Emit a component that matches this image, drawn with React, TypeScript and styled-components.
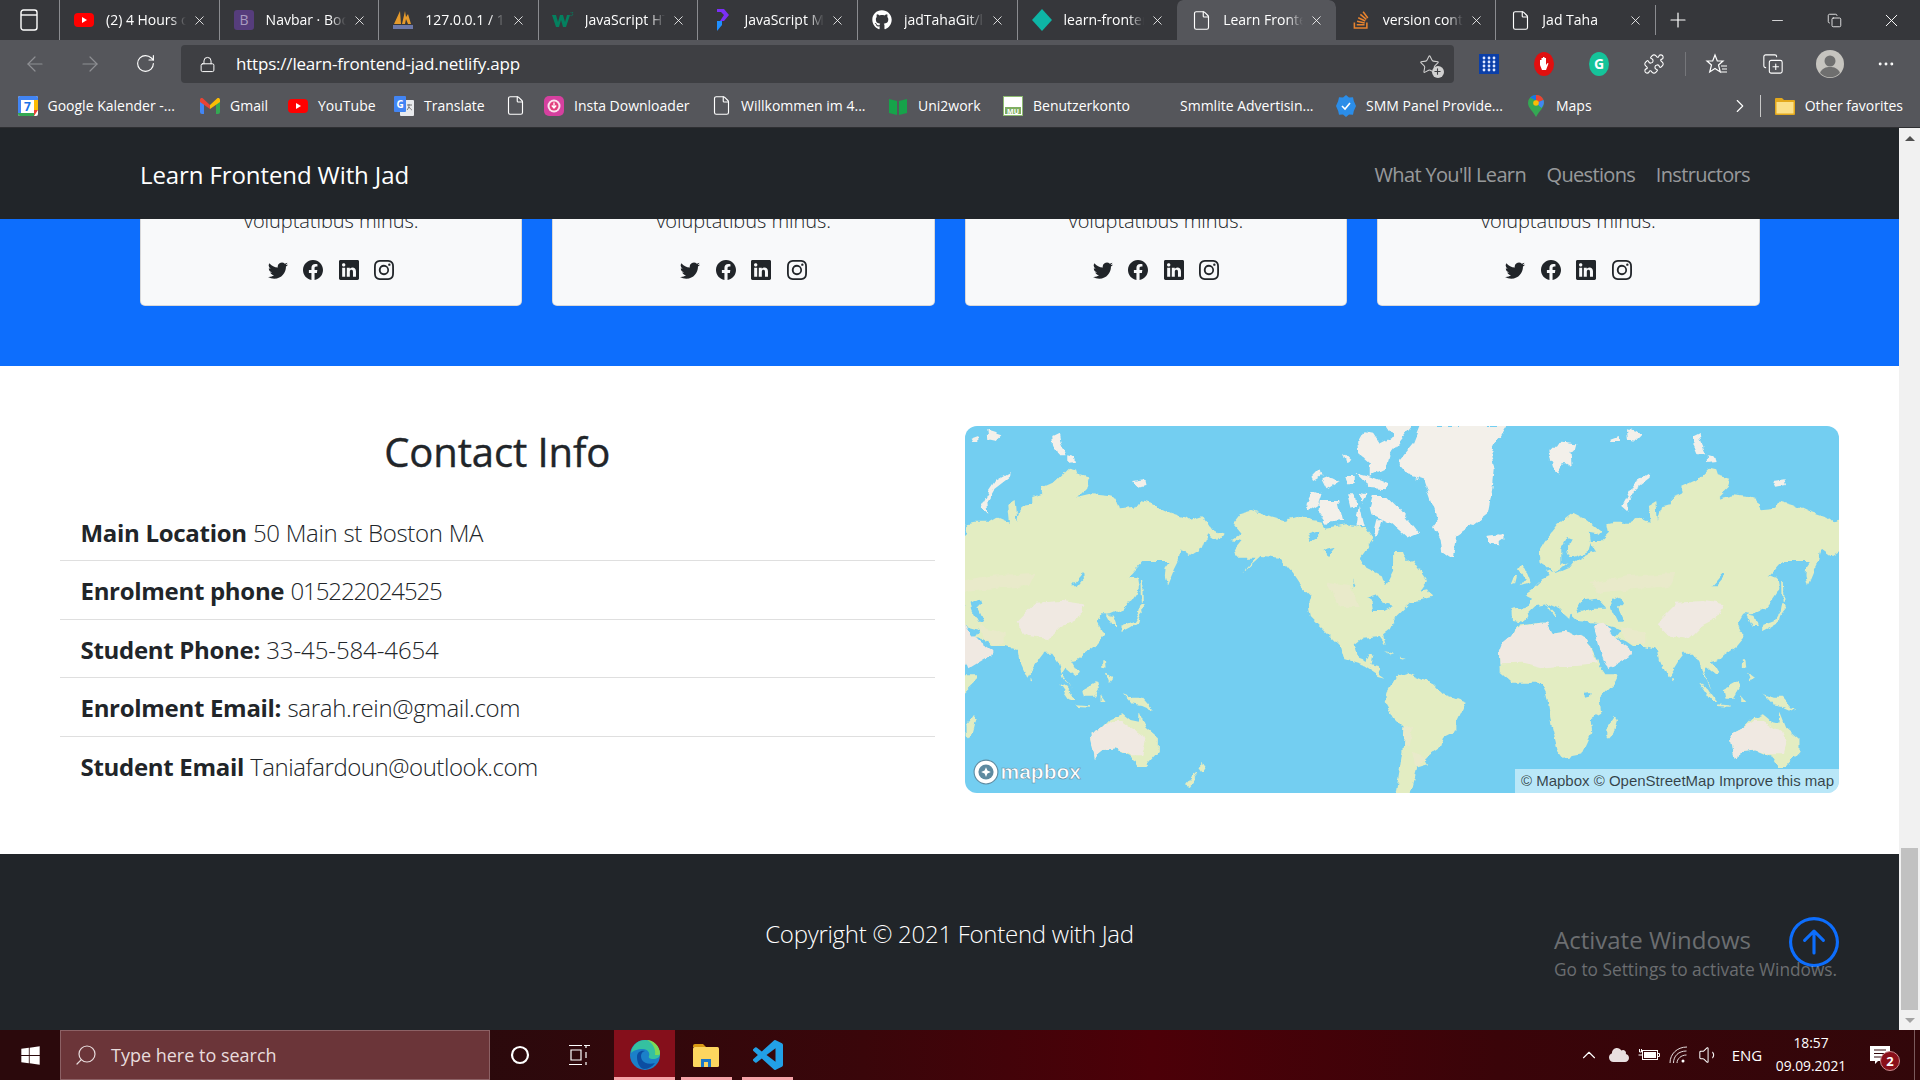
import React from "react";
import styled, { createGlobalStyle } from "styled-components";
import {
  ArrowLeft, ArrowRight, RotateCw, Lock, File, X, Plus, Minus, Copy, Puzzle, Star, CopyPlus,
  Ellipsis, ChevronRight, ChevronUp, Search, Volume1,
} from "lucide-react";
import { BsTwitter, BsFacebook, BsLinkedin, BsInstagram, BsArrowUpCircle } from "react-icons/bs";
import { FaGithub, FaStackOverflow, FaWindows, FaCloud } from "react-icons/fa";

const uiFont = `"Open Sans", "Noto Sans", sans-serif`;

const GlobalStyle = createGlobalStyle`
  html, body {
    margin: 0;
    height: 100%;
    overflow: hidden;
    font-family: ${uiFont};
  }
  * { box-sizing: border-box; }
`;

/* favicons */
const Favicon = ({ name }: { name: string }) => {
  switch (name) {
    case "youtube":
      return (
        <svg width="20" height="14" viewBox="0 0 20 14">
          <rect width="20" height="14" rx="4" fill="#f00" />
          <path d="M8 4l5 3-5 3z" fill="#fff" />
        </svg>
      );
    case "bootstrap":
      return (
        <svg width="20" height="20" viewBox="0 0 20 20">
          <rect width="20" height="20" rx="3" fill="#563d7c" />
          <text x="10" y="15" textAnchor="middle" fontSize="14" fill="#a99bc0" fontFamily="Open Sans">B</text>
        </svg>
      );
    case "pma":
      return (
        <svg width="22" height="20" viewBox="0 0 22 20">
          <path d="M2 14 8 1l1 13zM10 14l3-13 1 6 2-3 3 10h-3l-2-5-1 5z" fill="#e59a2c" />
          <rect x="1" y="15" width="20" height="4" fill="#6c78a8" />
        </svg>
      );
    case "w3":
      return (
        <svg width="22" height="16" viewBox="0 0 22 16">
          <path d="M0 3h4l2 7 2-7h3l2 7 2-7h3l-4 12h-3L9 8l-2 7H4z" fill="#04805f" />
          <path d="M18 0h3l-1 1.500c1 .4 1 2-.5 2.200-.5 0-1-.2-1.300-.6" fill="none" stroke="#04805f" strokeWidth=".7" />
        </svg>
      );
    case "jsinfo":
      return (
        <svg width="16" height="22" viewBox="0 0 16 22">
          <path d="M3 0h7l5 6-5 6H6l4-6-3-3H3z" fill="#7b2ff7" />
          <path d="M3 12h5v4l-5 6z" fill="#1f8fff" />
        </svg>
      );
    case "github":
      return <FaGithub size={20} color="#fff" />;
    case "netlify":
      return (
        <svg width="20" height="22" viewBox="0 0 20 22">
          <path d="M10 0 20 11 10 22 0 11z" fill="#0eb5a5" />
        </svg>
      );
    case "doc":
      return <File size={21} color="#fff" strokeWidth={1.3} />;
    case "so":
      return <FaStackOverflow size={20} color="#e8832e" />;
    case "calendar":
      return (
        <svg width="20" height="20" viewBox="0 0 20 20">
          <rect width="20" height="20" rx="2" fill="#fff" />
          <path d="M0 2a2 2 0 0 1 2-2h16a2 2 0 0 1 2 2v2H0z" fill="#4285f4" />
          <path d="M0 4h3v13H0z" fill="#4285f4" />
          <path d="M0 17h16v3H2a2 2 0 0 1-2-2z" fill="#34a853" />
          <path d="M16 14h4l-4 6z" fill="#ea4335" />
          <path d="M16 4h4v10h-4z" fill="#fbbc04" />
          <text x="9.500" y="15" textAnchor="middle" fontSize="12" fontWeight="700" fill="#1a73e8" fontFamily="Open Sans">7</text>
        </svg>
      );
    case "gmail":
      return (
        <svg width="20" height="16" viewBox="0 0 20 16">
          <path d="M0 2v12a2 2 0 0 0 2 2h2V6z" fill="#4285f4" />
          <path d="M20 2v12a2 2 0 0 1-2 2h-2V6z" fill="#34a853" />
          <path d="M0 2c0-2 2-2.500 3-1.500L10 7v4L0 4z" fill="#ea4335" />
          <path d="M20 2c0-2-2-2.500-3-1.500L10 7v4l10-7z" fill="#fbbc04" />
        </svg>
      );
    case "translate":
      return (
        <svg width="20" height="20" viewBox="0 0 20 20">
          <rect x="6" y="4" width="14" height="16" rx="1" fill="#e8eaed" />
          <rect width="12" height="16" rx="1" fill="#4285f4" />
          <text x="6" y="12" textAnchor="middle" fontSize="10" fontWeight="700" fill="#fff" fontFamily="Open Sans">G</text>
          <path d="M13 9h5M15 8v1c0 2-1 4-2 5M15 11c1 1.500 2 2.500 3 3" stroke="#777" fill="none" />
        </svg>
      );
    case "insta":
      return (
        <svg width="20" height="20" viewBox="0 0 20 20">
          <rect width="20" height="20" rx="5" fill="#d6409f" />
          <circle cx="10" cy="10" r="6.500" fill="#fbe3ee" />
          <circle cx="10" cy="10" r="4.500" fill="#e2407e" />
          <path d="M10 6.500v5M7.800 9.500 10 12l2.200-2.500" stroke="#fff" fill="none" strokeWidth="1.300" />
        </svg>
      );
    case "uni":
      return (
        <svg width="20" height="18" viewBox="0 0 20 18">
          <path d="M1 2l8 2v14l-8-2zM19 2l-8 2v14l8-2z" fill="#16a34a" />
        </svg>
      );
    case "mu":
      return (
        <svg width="20" height="20" viewBox="0 0 20 20">
          <rect x=".5" y=".5" width="19" height="19" fill="#fff" stroke="#8dbb70" />
          <rect x="2" y="11" width="16" height="7" fill="#7fae62" />
          <text x="10" y="17.500" textAnchor="middle" fontSize="7" fontWeight="700" fill="#fff" fontFamily="Open Sans">MU</text>
        </svg>
      );
    case "smm":
      return (
        <svg width="20" height="22" viewBox="0 0 20 22">
          <path d="M10 0l3 2.500 4-.3.8 3.800L20 11l-2.200 5-.8 3.800-4-.3L10 22l-3-2.500-4 .3-.8-3.800L0 11l2.200-5L3 2.200l4 .3z" fill="#2b8de8" />
          <path d="M6 11l3 3 5-6" stroke="#fff" strokeWidth="1.600" fill="none" />
        </svg>
      );
    case "maps":
      return (
        <svg width="16" height="22" viewBox="0 0 16 22">
          <path d="M8 0a8 8 0 0 1 8 8c0 5-5 8-8 14-3-6-8-9-8-14a8 8 0 0 1 8-8z" fill="#34a853" />
          <path d="M2 2.500A8 8 0 0 1 8 0v5.500z" fill="#1a73e8" />
          <path d="M8 0a8 8 0 0 1 7.500 5L8 8z" fill="#ea4335" />
          <path d="M15.500 5c1 3 0 5-2 8L8 8z" fill="#4285f4" />
          <circle cx="8" cy="8" r="2.800" fill="#fbbc04" />
        </svg>
      );
    case "folder":
      return (
        <svg width="20" height="18" viewBox="0 0 20 18">
          <path d="M0 2a1 1 0 0 1 1-1h6l2 2h10a1 1 0 0 1 1 1v13a1 1 0 0 1-1 1H1a1 1 0 0 1-1-1z" fill="#e3a81c" />
          <rect x="1.500" y="5" width="17" height="11.500" fill="#fbe08a" />
        </svg>
      );
    default:
      return null;
  }
};

const tabs = [
  { icon: "youtube", title: "(2) 4 Hours of Study", divider: true },
  { icon: "bootstrap", title: "Navbar · Bootstrap", divider: true },
  { icon: "pma", title: "127.0.0.1 / 127.0.0.1", divider: true },
  { icon: "w3", title: "JavaScript HTML DOM", divider: true },
  { icon: "jsinfo", title: "JavaScript Modules", divider: true },
  { icon: "github", title: "jadTahaGit/learn", divider: true },
  { icon: "netlify", title: "learn-frontend-jad", divider: true },
  { icon: "doc", title: "Learn Frontend With", active: true },
  { icon: "so", title: "version control" },
  { icon: "doc", title: "Jad Taha", divider: true },
];

const bookmarks = [
  { icon: "calendar", text: "Google Kalender -...", width: 182.5 },
  { icon: "gmail", text: "Gmail", width: 88 },
  { icon: "youtube", text: "YouTube", width: 106 },
  { icon: "translate", text: "Translate", width: 111 },
  { icon: "doc", text: "", width: 39 },
  { icon: "insta", text: "Insta Downloader", width: 167 },
  { icon: "doc", text: "Willkommen im 4...", width: 177 },
  { icon: "uni", text: "Uni2work", width: 115 },
  { icon: "mu", text: "Benutzerkonto", width: 147 },
  { icon: "", text: "Smmlite Advertisin...", width: 186 },
  { icon: "smm", text: "SMM Panel Provide...", width: 190 },
  { icon: "maps", text: "Maps", width: 120 },
];

const contacts = [
  { label: "Main Location", value: "50 Main st Boston MA", spacing: -0.3 },
  { label: "Enrolment phone", value: "015222024525", spacing: -1.1 },
  { label: "Student Phone:", value: "33-45-584-4654", spacing: -0.1 },
  { label: "Enrolment Email:", value: "sarah.rein@gmail.com", spacing: -0.3 },
  { label: "Student Email", value: "Taniafardoun@outlook.com", spacing: -0.46 },
];

/* map shapes, traced from the tiles at 3x */
const oldWorld = {
  land: [
    "68,548 110,542 130,515 108,505 130,490 160,460 180,450 165,430 185,440 205,440 240,425 260,400 290,385 320,375 300,345 330,345 355,320 350,295 370,290 420,290 445,275 480,290 475,240 500,225 505,285 515,240 550,235 550,210 580,200 575,185 620,165 660,125 680,130 685,145 722,155 715,185 685,215 730,205 780,210 800,215 810,250 860,245 875,225 910,235 965,260 1010,275 1023,285 1063,273 1088,310 1128,320 1108,345 1078,325 1063,365 1023,390 995,370 985,405 945,405 880,405 840,450 865,460 870,490 850,520 830,545 785,565 760,565 745,590 765,630 740,660 700,690 690,700 670,705 690,740 680,750 650,725 640,740 665,790 640,750 630,710 610,680 585,680 570,700 535,755 510,700 505,670 470,660 430,660 400,640 375,635 395,610 320,590 262,585 240,565 235,585 215,550 170,530 205,570 195,570 170,535 140,540 115,565 100,590 70,585",
    "145,378 165,345 205,295 250,260 290,280 335,315 325,325 300,320 305,355 300,372 250,400 215,430 190,440 165,415 150,405",
    "85,430 95,415 105,425 123,470 90,480 105,460",
    "65,475 75,450 85,450 80,470",
    "950,425 985,375 995,370 990,400 975,430 955,478 948,450",
    "875,535 885,535 890,545 870,570 865,590 840,605 815,618 815,600 855,585 870,560",
    "875,462 880,462 882,530 876,530",
    "770,565 795,570 805,600 790,600",
    "760,700 768,700 770,725 760,722",
    "770,740 790,755 780,768",
    "628,772 650,785 680,825 665,825",
    "680,835 720,838 720,842 682,840",
    "700,790 745,765 750,790 735,815 705,815",
    "755,805 770,825 755,825",
    "822,805 850,815 880,815 915,855 880,840 850,835",
    "545,755 551,758 551,766 545,765",
    "65,630 80,600 150,590 170,590 185,620 230,615 295,640 330,715 350,745 385,745 370,775 330,815 335,860 300,880 305,920 275,985 220,995 205,975 185,895 170,800 155,770 70,770 30,735 28,680",
    "350,905 375,870 382,880 370,925 358,938 350,930",
    "722,925 760,905 785,880 820,865 845,885 870,890 872,860 890,905 930,940 930,975 890,1020 865,1020 845,990 800,970 760,975 735,995",
  ],
  pale: [
    "300,470 420,450 560,440 540,480 430,490 320,500",
    "395,600 470,620 470,655 430,655 400,635",
  ],
  sand: [
    "28,680 40,650 65,630 80,605 150,590 170,590 185,620 230,615 295,640 325,715 260,720 210,720 160,725 100,710 30,712",
    "310,595 345,590 370,625 395,650 430,675 430,685 355,730 335,680",
    "722,925 760,905 790,885 820,885 880,925 890,950 880,985 845,985 800,970 760,975 735,995",
    "520,570 560,530 640,525 705,535 680,580 640,600 600,640 540,630 500,590",
  ],
  ice: [
    "0,332 38,325 42,340 20,355 0,352",
    "395,240 420,195 440,165 482,140 480,155 435,190 415,225 418,260",
    "175,65 205,65 215,50 260,55 255,75 240,80 243,122 225,110 205,140 190,120",
    "610,30 630,20 635,50 650,85 625,85 612,55",
    "655,85 675,90 678,105 655,108",
    "850,165 885,160 890,180 860,185",
    "365,38 388,30 388,48 370,48",
    "412,10 460,25 440,45 415,40",
  ],
  water: [
    "265,550 285,520 320,515 350,545 310,545 262,562",
    "365,530 395,515 400,530 385,545 405,590 385,590 370,560",
    "672,478 700,445 705,450 682,478",
    "285,800 300,798 298,812 285,815",
    "235,330 250,335 230,375 240,395 275,385 285,390 250,410 215,420 215,365",
  ],
};

const newWorld = {
  land: [
    "160,290 180,265 215,255 260,270 315,285 365,270 395,285 430,290 440,305 500,295 555,305 580,340 540,395 560,425 610,450 620,480 640,440 640,375 670,375 680,405 700,400 745,465 720,495 745,490 760,515 725,525 690,530 650,570 630,610 610,625 618,655 600,630 550,635 525,655 535,695 560,705 570,685 580,690 575,715 600,720 605,745 620,755 600,750 540,710 490,695 480,660 430,610 390,570 385,545 395,510 370,485 340,440 300,395 245,390 190,440 230,395 170,395 165,370 185,345 155,340 185,320",
    "610,675 640,685 630,688",
    "660,692 678,695 664,698",
    "620,800 650,750 680,740 760,775 790,805 858,830 830,890 830,915 790,935 780,965 735,995 745,1015 710,1025 690,1101 648,1101 660,1030 670,960 675,905 640,870 615,825",
    "55,1005 78,1020 65,1040 55,1025",
    "18,1075 45,1040 55,1045 30,1080",
  ],
  pale: ["675,905 700,900 690,960 670,960", "700,975 740,1000 710,1025", "440,470 510,480 540,540 480,540"],
  sand: [] as string[],
  ice: [
    "660,100 700,50 720,0 980,0 950,50 935,80 945,130 940,180 925,260 880,295 830,330 820,390 810,398 785,380 780,340 760,300 775,280 760,240 735,165 690,150 660,115",
    "380,235 400,195 425,205 415,235 390,250",
    "420,225 475,225 490,285 440,290 415,255",
    "505,205 525,205 530,240 515,245",
    "540,200 560,205 545,230",
    "570,245 580,210 620,210 660,250 715,320 680,335 630,290 600,275 575,265",
    "395,155 420,130 425,150 400,165",
    "425,160 450,150 480,165 440,190",
    "500,150 525,150 525,175 505,175",
    "530,140 570,150 620,170 615,190 560,185 555,165",
    "535,50 555,15 580,20 600,50 640,30 620,0 700,0 660,50 630,90 620,125 570,150 570,110 540,85",
    "490,80 515,105 500,115",
    "590,280 610,280 590,335 580,320",
    "540,240 555,300 530,300",
    "920,330 960,325 960,355 930,352",
  ],
  water: [
    "560,515 590,505 605,525 640,540 610,555 580,555 575,525",
    "385,325 415,315 415,335 395,345",
    "520,460 530,480 525,485",
    "425,375 465,365 445,390",
  ],
};

const Continents = ({ shapes, x }: { shapes: typeof oldWorld; x: number }) => (
  <g transform={`translate(${x} 0) scale(0.3333)`}>
    {shapes.land.map((p) => <polygon key={p} points={p} fill="#e3edc2" />)}
    {shapes.pale.map((p) => <polygon key={p} points={p} fill="#e9eaca" />)}
    {shapes.sand.map((p) => <polygon key={p} points={p} fill="#f0e9e2" />)}
    {shapes.ice.map((p) => <polygon key={p} points={p} fill="#f3f0ea" />)}
    {shapes.water.map((p) => <polygon key={p} points={p} fill="#73cef1" />)}
  </g>
);

export default function App() {
  return (
    <>
      <GlobalStyle />
      <Screen>
        <TabStrip>
          <WindowButton>
            <svg width="18" height="22" viewBox="0 0 18 22" fill="none" stroke="#fff" strokeWidth="1.400">
              <rect x="1" y="1" width="16" height="20" rx="2.500" />
              <path d="M1 6h16" />
            </svg>
          </WindowButton>
          {tabs.map((t) => (
            <Tab key={t.title} $active={t.active} $divider={t.divider}>
              <TabIcon><Favicon name={t.icon} /></TabIcon>
              <TabTitle>{t.title}</TabTitle>
              <TabClose><X size={15} strokeWidth={1.3} /></TabClose>
            </Tab>
          ))}
          <NewTab><Plus size={24} strokeWidth={1.2} /></NewTab>
          <WindowControls>
            <WindowControl><Minus size={17} strokeWidth={1.1} /></WindowControl>
            <WindowControl><Copy size={15} strokeWidth={1.3} /></WindowControl>
            <WindowControl><X size={21} strokeWidth={1.1} /></WindowControl>
          </WindowControls>
        </TabStrip>

        <Toolbar>
          <NavButton $dim><ArrowLeft size={24} strokeWidth={1.2} /></NavButton>
          <NavButton $dim><ArrowRight size={24} strokeWidth={1.2} /></NavButton>
          <NavButton><RotateCw size={21} strokeWidth={1.3} /></NavButton>
          <Omnibox>
            <Lock size={17} strokeWidth={1.4} />
            <Url>https://learn-frontend-jad.netlify.app</Url>
            <FavStar>
              <Star size={21} strokeWidth={1.2} />
              <FavPlus><Plus size={9} strokeWidth={3} /></FavPlus>
            </FavStar>
          </Omnibox>
          <ToolButton>
            <svg width="20" height="20" viewBox="0 0 20 20">
              <rect width="20" height="20" fill="#0b3fa8" />
              {[5, 10, 15].map((cx) => [4, 8, 12, 16].map((cy) => (
                <circle key={`${cx}-${cy}`} cx={cx} cy={cy} r="1.400" fill="#dfe8ff" />
              )))}
            </svg>
          </ToolButton>
          <ToolButton>
            <svg width="20" height="24" viewBox="0 0 20 24">
              <ellipse cx="10" cy="12" rx="10" ry="12" fill="#e00f0f" />
              <path d="M6 13V8h1.500v3V6h1.500v5-6h1.500v6-5H12v7l1.500-2 1 .6-2.500 6.400H8z" fill="#fff" />
            </svg>
          </ToolButton>
          <ToolButton>
            <svg width="20" height="24" viewBox="0 0 20 24">
              <ellipse cx="10" cy="12" rx="10" ry="12" fill="#15c39a" />
              <text x="10" y="17" textAnchor="middle" fontSize="14" fontWeight="700" fill="#fff" fontFamily="Open Sans">G</text>
            </svg>
          </ToolButton>
          <ToolButton><Puzzle size={22} strokeWidth={1.2} /></ToolButton>
          <ToolDivider />
          <ToolButton $wide>
            <svg width="24" height="24" viewBox="0 0 24 24" fill="none" stroke="#fff" strokeWidth="1.200">
              <path d="M10 3l2.300 6H18l-4.500 4 1.800 7L10 16.500 4.700 20l1.800-7L2 9h5.700z" />
              <path d="M16 14h6M17 17h5M16 20h6" />
            </svg>
          </ToolButton>
          <ToolButton $wide><CopyPlus size={22} strokeWidth={1.2} /></ToolButton>
          <ToolButton $wide>
            <svg width="28" height="28" viewBox="0 0 28 28">
              <circle cx="14" cy="14" r="14" fill="#c6c4bf" />
              <circle cx="14" cy="11" r="5.500" fill="#6f6f6f" />
              <path d="M4 23c2-5 6-6 10-6s8 1 10 6a14 14 0 0 1-20 0z" fill="#6f6f6f" />
            </svg>
          </ToolButton>
          <ToolButton $wide><Ellipsis size={20} strokeWidth={1.5} /></ToolButton>
        </Toolbar>

        <BookmarkBar>
          {bookmarks.map((b) => (
            <Bookmark key={b.text + b.width} $width={b.width}>
              <BookmarkIcon><Favicon name={b.icon} /></BookmarkIcon>
              {b.text}
            </Bookmark>
          ))}
          <BookmarkEnd>
            <ChevronRight size={22} strokeWidth={1.2} />
            <EndDivider />
            <BookmarkIcon><Favicon name="folder" /></BookmarkIcon>
            Other favorites
          </BookmarkEnd>
        </BookmarkBar>

        <Viewport>
          <Page>
            <Navbar>
              <Brand>Learn Frontend With Jad</Brand>
              <NavLinks>
                <NavLink>What You'll Learn</NavLink>
                <NavLink>Questions</NavLink>
                <NavLink>Instructors</NavLink>
              </NavLinks>
            </Navbar>

            <Instructors>
              {[0, 1, 2, 3].map((i) => (
                <Card key={i}>
                  <CardText>voluptatibus minus.</CardText>
                  <Socials>
                    <BsTwitter size={20} />
                    <BsFacebook size={20} />
                    <BsLinkedin size={20} />
                    <BsInstagram size={20} />
                  </Socials>
                </Card>
              ))}
            </Instructors>

            <Contact>
              <div>
                <Heading>Contact Info</Heading>
                <ContactList>
                  {contacts.map((c) => (
                    <ContactRow key={c.label}>
                      <strong>{c.label}</strong> <ContactValue $spacing={c.spacing}>{c.value}</ContactValue>
                    </ContactRow>
                  ))}
                </ContactList>
              </div>
              <MapPanel>
                <MapSvg viewBox="0 0 875 367" preserveAspectRatio="none">
                  <defs>
                    <filter id="coast" filterUnits="userSpaceOnUse" x="-40" y="-40" width="960" height="450">
                      <feTurbulence type="fractalNoise" baseFrequency="0.09" numOctaves="3" seed="4" />
                      <feDisplacementMap in="SourceGraphic" scale="7" xChannelSelector="R" yChannelSelector="G" />
                    </filter>
                  </defs>
                  <g filter="url(#coast)">
                    <Continents shapes={oldWorld} x={-116} />
                    <Continents shapes={newWorld} x={215} />
                    <Continents shapes={oldWorld} x={525} />
                  </g>
                </MapSvg>
                <MapLogo>
                  <svg width="26" height="26" viewBox="0 0 24 24">
                    <circle cx="12" cy="12" r="11" fill="#fff" stroke="#5d8aa0" strokeWidth="1" />
                    <circle cx="12" cy="12" r="7" fill="#5d8aa0" />
                    <path d="M12 7.500l1.300 3.200 3.200 1.300-3.200 1.300-1.300 3.200-1.300-3.200L7.500 12l3.200-1.300z" fill="#fff" />
                  </svg>
                  mapbox
                </MapLogo>
                <Attribution>© Mapbox © OpenStreetMap Improve this map</Attribution>
              </MapPanel>
            </Contact>

            <Footer>Copyright © 2021 Fontend with Jad</Footer>

            <ToTop><BsArrowUpCircle size={50} /></ToTop>
            <Watermark>
              <WatermarkTitle>Activate Windows</WatermarkTitle>
              <WatermarkText>Go to Settings to activate Windows.</WatermarkText>
            </Watermark>
          </Page>
          <Scrollbar>
            <ScrollArrow $up />
            <ScrollTrack><ScrollThumb /></ScrollTrack>
            <ScrollArrow />
          </Scrollbar>
        </Viewport>

        <Taskbar>
          <StartButton><FaWindows size={21} /></StartButton>
          <SearchBox>
            <SearchGlass><Search size={24} strokeWidth={1.2} /></SearchGlass>
            Type here to search
          </SearchBox>
          <TaskButton>
            <svg width="20" height="20" viewBox="0 0 20 20" fill="none" stroke="#fff" strokeWidth="2.200">
              <circle cx="10" cy="10" r="8" />
            </svg>
          </TaskButton>
          <TaskButton>
            <svg width="22" height="22" viewBox="0 0 22 22" fill="none" stroke="#fff" strokeWidth="1.200">
              <path d="M0 1.500h13M0 20.500h13M2 6h10v10H2zM17 1v3M17 8v6M17 18v3M15 1.500h6" />
            </svg>
          </TaskButton>
          <AppButton $active>
            <svg width="32" height="32" viewBox="0 0 32 32">
              <circle cx="16" cy="16" r="15" fill="#1b80c9" />
              <path d="M2 14C3 5 10 1 16 1c8 0 15 6 15 14 0 3-3 5-7 5-3 0-5-1-4-3 1-3-1-7-6-7-6 0-10 2-12 4z" fill="#35c1a0" />
              <path d="M31 15c0-8-7-14-13-14 6 3 9 9 8 15 2 0 5-0 5-1z" fill="#7ed957" />
              <path d="M8 18c0-5 4-7 8-6-4 1-5 5-3 9 2 3 7 5 13 3-3 4-7 6-11 6-5-1-7-7-7-12z" fill="#0c4da2" />
            </svg>
          </AppButton>
          <AppButton $open>
            <svg width="28" height="28" viewBox="0 0 28 28">
              <path d="M1 5a2 2 0 0 1 2-2h8l3 3H1z" fill="#d99a14" />
              <rect x="1" y="6" width="26" height="20" rx="1.500" fill="#fdd65f" />
              <path d="M9 26v-8h10v8h-3v-5h-4v5z" fill="#1c78c8" />
            </svg>
          </AppButton>
          <AppButton $open>
            <svg width="30" height="30" viewBox="0 0 24 24">
              <path
                fill="#22a0e6"
                d="M23.15 2.587L18.21.21a1.494 1.494 0 0 0-1.705.29l-9.46 8.63-4.12-3.128a.999.999 0 0 0-1.276.057L.327 7.261A1 1 0 0 0 .326 8.74L3.899 12 .326 15.26a1 1 0 0 0 .001 1.479L1.65 17.94a.999.999 0 0 0 1.276.057l4.12-3.128 9.46 8.63a1.492 1.492 0 0 0 1.704.29l4.942-2.377A1.5 1.5 0 0 0 24 20.06V3.939a1.5 1.5 0 0 0-.85-1.352zm-5.146 14.861L10.826 12l7.178-5.448v10.896z"
              />
            </svg>
          </AppButton>
          <Tray>
            <TrayIcon><ChevronUp size={22} strokeWidth={1.2} /></TrayIcon>
            <TrayIcon><FaCloud size={20} color="#e8dfe0" /></TrayIcon>
            <TrayIcon>
              <svg width="22" height="14" viewBox="0 0 22 14" fill="none" stroke="#fff">
                <rect x="4.500" y="2.500" width="15" height="9" />
                <rect x="6" y="4" width="12" height="6" fill="#fff" stroke="none" />
                <path d="M20 5.500h1.500v3H20M.5 7H4M1.500 1v3h2V1" />
              </svg>
            </TrayIcon>
            <TrayIcon>
              <svg width="20" height="20" viewBox="0 0 20 20" fill="none" stroke="#e8dfe0" strokeWidth="1">
                <path d="M1 18C1 9 8 2 18 2M4.500 18c0-7 5-12 13-12M8 18c0-4 4-8 9.500-8" />
                <circle cx="14" cy="16" r="1.500" fill="#fff" stroke="none" />
              </svg>
            </TrayIcon>
            <TrayIcon><Volume1 size={22} strokeWidth={1.1} /></TrayIcon>
            <TrayLang>ENG</TrayLang>
            <Clock>
              <span>18:57</span>
              <span>09.09.2021</span>
            </Clock>
            <ActionCenter>
              <svg width="20" height="18" viewBox="0 0 20 18">
                <path d="M0 0h20v15H8l-3 3v-3H0z" fill="#fff" />
                <path d="M4 4h12M4 7.500h12M4 11h8" stroke="#32070a" />
              </svg>
              <ActionBadge>2</ActionBadge>
            </ActionCenter>
            <ShowDesktop />
          </Tray>
        </Taskbar>
      </Screen>
    </>
  );
}

const Screen = styled.div`
  width: 1920px;
  height: 1080px;
  display: flex;
  flex-direction: column;
  overflow: hidden;
  background: #fff;
`;

const TabStrip = styled.div`
  height: 40px;
  display: flex;
  flex-shrink: 0;
  background: #36373b;
  color: #fff;
`;

const WindowButton = styled.div`
  width: 59px;
  display: flex;
  align-items: center;
  justify-content: center;
  padding-right: 1px;
`;

const Tab = styled.div<{ $active?: boolean; $divider?: boolean }>`
  width: 159.6px;
  display: flex;
  align-items: center;
  position: relative;
  font-size: 14px;
  background: ${(p) => (p.$active ? "#55565b" : "transparent")};
  border-radius: ${(p) => (p.$active ? "7px 7px 0 0" : "0")};
  border-left: 1px solid ${(p) => (p.$divider ? "#8b8c90" : "transparent")};
  background-clip: padding-box;
`;

const TabIcon = styled.span`
  width: 46px;
  flex-shrink: 0;
  display: flex;
  justify-content: center;
  padding-left: 2px;
`;

const TabTitle = styled.span`
  width: 80px;
  padding-bottom: 1px;
  overflow: hidden;
  white-space: nowrap;
  mask-image: linear-gradient(to right, #000 80%, transparent 100%);
`;

const TabClose = styled.span`
  margin-left: 6px;
  display: flex;
`;

const NewTab = styled.div`
  width: 46px;
  display: flex;
  align-items: center;
  justify-content: center;
  border-left: 1px solid #8b8c90;
  margin: 5px 0;
`;

const WindowControls = styled.div`
  margin-left: auto;
  display: flex;
`;

const WindowControl = styled.div`
  width: 57px;
  display: flex;
  align-items: center;
  justify-content: center;
`;

const Toolbar = styled.div`
  height: 48px;
  flex-shrink: 0;
  display: flex;
  align-items: center;
  padding-left: 8px;
  background: #55565b;
  color: #fff;
`;

const NavButton = styled.div<{ $dim?: boolean }>`
  width: 55px;
  display: flex;
  justify-content: center;
  padding: 0 1px 1px 0;
  color: ${(p) => (p.$dim ? "#8e8f93" : "#fff")};
`;

const Omnibox = styled.div`
  width: 1272.6px;
  height: 38px;
  margin: 0 8px;
  padding: 0 0 0 18px;
  display: flex;
  align-items: center;
  border-radius: 4px;
  background: #3e3f43;
`;

const Url = styled.span`
  margin: 0 0 2px 20px;
  font-size: 17px;
  letter-spacing: -0.2px;
  color: #fff;
`;

const FavStar = styled.span`
  margin-left: auto;
  margin-right: 14px;
  display: flex;
  position: relative;
  color: #d0d0d0;
`;

const FavPlus = styled.span`
  position: absolute;
  right: -4px;
  bottom: -3px;
  width: 12px;
  height: 12px;
  border-radius: 50%;
  background: #d0d0d0;
  color: #3e3f43;
  display: flex;
  align-items: center;
  justify-content: center;
`;

const ToolButton = styled.div<{ $wide?: boolean }>`
  width: ${(p) => (p.$wide ? "56.5px" : "55px")};
  display: flex;
  justify-content: center;
`;

const ToolDivider = styled.div`
  width: 1px;
  height: 24px;
  margin: 0 3px;
  background: #75767a;
`;

const BookmarkBar = styled.div`
  height: 40px;
  flex-shrink: 0;
  display: flex;
  align-items: center;
  padding: 0 0 4px 19.5px;
  background: #55565b;
  border-bottom: 1px solid #2e2f32;
  color: #fff;
  font-size: 14px;
`;

const Bookmark = styled.div<{ $width: number }>`
  width: ${(p) => p.$width}px;
  display: flex;
  align-items: center;
  gap: 12px;
  white-space: nowrap;
`;

const BookmarkIcon = styled.span`
  width: 16px;
  flex-shrink: 0;
  display: flex;
  justify-content: center;
  svg {
    flex-shrink: 0;
  }
`;

const BookmarkEnd = styled.div`
  margin-left: auto;
  padding-right: 17px;
  display: flex;
  align-items: center;
  gap: 12px;
  white-space: nowrap;
`;

const EndDivider = styled.span`
  width: 1px;
  height: 22px;
  margin: 0 4px 0 -3px;
  background: #c8c8c8;
`;

const Viewport = styled.div`
  flex: 1;
  min-height: 0;
  display: flex;
`;

const Page = styled.div`
  width: 1899px;
  position: relative;
  overflow: hidden;
`;

const Navbar = styled.nav`
  height: 91px;
  padding: 2px 149px 0 140px;
  display: flex;
  align-items: center;
  justify-content: space-between;
  background: #212529;
`;

const Brand = styled.span`
  font-size: 24px;
  letter-spacing: -0.1px;
  color: #fff;
`;

const NavLinks = styled.div`
  display: flex;
  gap: 20.5px;
`;

const NavLink = styled.a`
  font-size: 20px;
  letter-spacing: -0.65px;
  color: rgba(255, 255, 255, 0.55);
`;

const Instructors = styled.section`
  height: 147px;
  padding: 0 139.5px 0 140px;
  display: grid;
  grid-template-columns: repeat(4, 1fr);
  gap: 30px;
  overflow: hidden;
  background: #0d6efd;
`;

const Card = styled.article`
  height: 87px;
  background: #f8f9fa;
  border: 1px solid rgba(0, 0, 0, 0.125);
  border-top: 0;
  border-radius: 0 0 5px 5px;
  color: #212529;
  text-align: center;
`;

const CardText = styled.p`
  margin: -13px 0 24px;
  font-size: 20px;
  font-weight: 300;
  letter-spacing: -0.05px;
  line-height: 30px;
`;

const Socials = styled.div`
  display: flex;
  justify-content: center;
  gap: 15.5px;
`;

const Contact = styled.section`
  height: 487.5px;
  padding: 60px 60px 0;
  display: grid;
  grid-template-columns: 1fr 1fr;
  gap: 30px;
  color: #212529;
`;

const Heading = styled.h2`
  margin: 2px 0 27px;
  font-size: 40px;
  font-weight: 500;
  letter-spacing: -0.1px;
  -webkit-text-stroke: 0.4px #212529;
  line-height: 48px;
  text-align: center;
`;

const ContactList = styled.ul`
  margin: 0;
  padding: 0;
  list-style: none;
`;

const ContactRow = styled.li`
  height: 58.4px;
  padding: 0 20.5px;
  font-size: 24px;
  font-weight: 300;
  line-height: 60px;
  white-space: nowrap;
  border-bottom: 1px solid #dfdfdf;
  &:last-child {
    border-bottom: 0;
  }
  strong {
    font-weight: 700;
    letter-spacing: -0.3px;
  }
`;

const ContactValue = styled.span<{ $spacing: number }>`
  letter-spacing: ${(p) => p.$spacing}px;
`;

const MapPanel = styled.div`
  height: 367px;
  position: relative;
  overflow: hidden;
  border-radius: 12px;
  background: #73cef1;
`;

const MapSvg = styled.svg`
  display: block;
  width: 100%;
  height: 100%;
`;

const MapLogo = styled.div`
  position: absolute;
  left: 8px;
  bottom: 8px;
  display: flex;
  align-items: center;
  gap: 2px;
  font-family: "Liberation Sans", sans-serif;
  font-size: 21px;
  font-weight: 700;
  color: #fff;
  -webkit-text-stroke: 0.5px #5d8aa0;
`;

const Attribution = styled.div`
  position: absolute;
  right: 0;
  bottom: 0;
  height: 24px;
  padding: 0 5px 0 6px;
  font-family: "Liberation Sans", sans-serif;
  font-size: 15px;
  line-height: 24px;
  color: rgba(0, 0, 0, 0.72);
  background: rgba(255, 255, 255, 0.5);
`;

const Footer = styled.footer`
  height: 176.5px;
  padding-top: 62px;
  font-size: 24px;
  font-weight: 300;
  letter-spacing: -0.27px;
  line-height: 36px;
  color: #fff;
  text-align: center;
  background: #212529;
`;

const ToTop = styled.a`
  position: absolute;
  left: 1789px;
  top: 789px;
  display: flex;
  color: #0d6efd;
`;

const Watermark = styled.div`
  position: absolute;
  left: 1554px;
  top: 795px;
  color: rgba(255, 255, 255, 0.34);
  pointer-events: none;
`;

const WatermarkTitle = styled.div`
  font-size: 24px;
  line-height: 34px;
`;

const WatermarkText = styled.div`
  font-size: 17.3px;
  line-height: 25px;
`;

const Scrollbar = styled.div`
  width: 21px;
  display: flex;
  flex-direction: column;
  background: #f1f1f1;
`;

const ScrollArrow = styled.div<{ $up?: boolean }>`
  height: 20px;
  display: flex;
  align-items: center;
  justify-content: center;
  &::after {
    content: "";
    border-left: 5px solid transparent;
    border-right: 5px solid transparent;
    ${(p) => (p.$up ? "border-bottom: 5px solid #505050;" : "border-top: 5px solid #a3a3a3;")}
  }
`;

const ScrollTrack = styled.div`
  flex: 1;
  display: flex;
  flex-direction: column;
  justify-content: flex-end;
`;

const ScrollThumb = styled.div`
  height: 162px;
  margin: 0 2px;
  background: #c1c1c1;
`;

const Taskbar = styled.div`
  height: 50px;
  flex-shrink: 0;
  display: flex;
  color: #fff;
  background: linear-gradient(90deg, #2b090c 0%, #2b090c 25%, #3a060a 45%, #4c0008 60%, #3a0409 78%, #32070a 100%);
`;

const StartButton = styled.div`
  width: 60px;
  display: flex;
  align-items: center;
  justify-content: center;
`;

const SearchBox = styled.div`
  width: 430px;
  padding-left: 13px;
  display: flex;
  align-items: center;
  gap: 13px;
  font-size: 18px;
  color: #e8dcdd;
  background: #6b3539;
  border: 1px solid #8c6165;
`;

const SearchGlass = styled.span`
  display: flex;
  transform: scaleX(-1);
`;

const TaskButton = styled.div`
  width: 60px;
  display: flex;
  align-items: center;
  justify-content: center;
`;

const AppButton = styled.div<{ $active?: boolean; $open?: boolean }>`
  width: 61px;
  display: flex;
  align-items: center;
  justify-content: center;
  position: relative;
  margin-left: ${(p) => (p.$active ? "4px" : "0.5px")};
  background: ${(p) => (p.$active ? "#850f1b" : "transparent")};
  &::after {
    content: "";
    position: absolute;
    left: ${(p) => (p.$active ? "0" : "5px")};
    right: ${(p) => (p.$active ? "0" : "5px")};
    bottom: 0;
    height: 3px;
    background: #f5a3a8;
  }
`;

const Tray = styled.div`
  margin-left: auto;
  display: flex;
  align-items: center;
  padding-right: 5px;
`;

const TrayIcon = styled.div`
  width: 30px;
  display: flex;
  justify-content: center;
`;

const TrayLang = styled.div`
  width: 46px;
  text-align: center;
  font-size: 15px;
`;

const Clock = styled.div`
  width: 82px;
  display: flex;
  flex-direction: column;
  align-items: center;
  gap: 3px;
  margin-bottom: 1px;
  font-size: 13.8px;
  line-height: 20px;
`;

const ActionCenter = styled.div`
  width: 56px;
  display: flex;
  justify-content: center;
  position: relative;
`;

const ActionBadge = styled.span`
  position: absolute;
  left: 28px;
  top: 5px;
  width: 20px;
  height: 20px;
  border-radius: 50%;
  background: #8a0f1a;
  border: 1px solid #c98a8f;
  font-size: 13px;
  font-weight: 700;
  line-height: 18px;
  text-align: center;
`;

const ShowDesktop = styled.div`
  width: 1px;
  height: 50px;
  margin-left: 6px;
  background: #7a5a5c;
`;
